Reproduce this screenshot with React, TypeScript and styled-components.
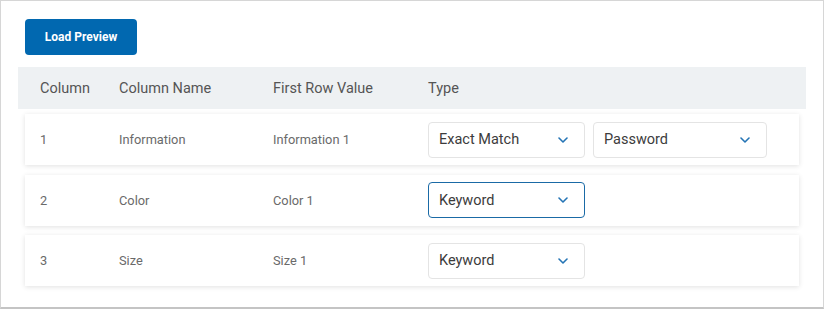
import styled, { createGlobalStyle } from 'styled-components';

const GlobalStyle = createGlobalStyle`
  body {
    margin: 0;
    background: #ffffff;
    font-family: Roboto, 'Liberation Sans', Arial, sans-serif;
  }
`;

const Frame = styled.div`
  box-sizing: border-box;
  width: 824px;
  height: 309px;
  padding: 18px 17px 0 17px;
  border: 1px solid #d6d6d6;
  border-bottom: 2px solid #c4c4c4;
  background: #fff;
`;

const LoadButton = styled.button`
  display: block;
  margin-left: 7px;
  width: 112px;
  height: 36px;
  padding: 0;
  border: none;
  border-radius: 4px;
  background: #0168b0;
  color: #fff;
  font-family: Roboto, 'Liberation Sans', Arial, sans-serif;
  font-size: 12px;
  font-weight: 700;
  cursor: pointer;
`;

const Grid = styled.div`
  display: grid;
  grid-template-columns: 79px 154px 155px 1fr;
  align-items: center;
`;

const Header = styled(Grid)`
  margin-top: 12px;
  height: 42px;
  padding-left: 22px;
  background: #eef1f3;
  font-size: 14.5px;
  color: #555;
`;

const Rows = styled.div`
  display: flex;
  flex-direction: column;
  gap: 9.5px;
  margin: 5px 7px 0 7px;
`;

const Row = styled(Grid)`
  height: 51px;
  padding-left: 15px;
  background: #fff;
  box-shadow: 0 1px 5px rgba(0, 0, 0, 0.12);
  font-size: 12.8px;
  color: #6a6a6a;
`;

const TypeCell = styled.div`
  display: flex;
  gap: 8px;
`;

const Select = styled.div<{ $width: number; $focused?: boolean }>`
  box-sizing: border-box;
  display: flex;
  align-items: center;
  justify-content: space-between;
  width: ${(p) => p.$width}px;
  height: 36px;
  padding: 0 16px 0 10px;
  border: ${(p) => (p.$focused ? '1.5px solid #1a6aa6' : '1px solid #e4e4e4')};
  border-radius: 4px;
  font-size: 14.5px;
  color: #3c3c3c;
`;

const Chevron = () => (
  <svg width='10' height='6' viewBox='0 0 10 6' fill='none'>
    <path d='M1 1l4 4 4-4' stroke='#2474b5' strokeWidth='1.6' strokeLinecap='round' strokeLinejoin='round' />
  </svg>
);

const rows = [
  { id: 1, name: 'Information', value: 'Information 1', types: [{ label: 'Exact Match', width: 157 }, { label: 'Password', width: 174 }] },
  { id: 2, name: 'Color', value: 'Color 1', types: [{ label: 'Keyword', width: 157, focused: true }] },
  { id: 3, name: 'Size', value: 'Size 1', types: [{ label: 'Keyword', width: 157 }] },
];

const App = () => {
  return (
    <>
      <GlobalStyle />
      <Frame>
        <LoadButton>Load Preview</LoadButton>
        <Header>
          <span>Column</span>
          <span>Column Name</span>
          <span>First Row Value</span>
          <span>Type</span>
        </Header>
        <Rows>
          {rows.map((row) => (
            <Row key={row.id}>
              <span>{row.id}</span>
              <span>{row.name}</span>
              <span>{row.value}</span>
              <TypeCell>
                {row.types.map((t) => (
                  <Select key={t.label} $width={t.width} $focused={'focused' in t && t.focused}>
                    {t.label}
                    <Chevron />
                  </Select>
                ))}
              </TypeCell>
            </Row>
          ))}
        </Rows>
      </Frame>
    </>
  );
};

export default App;
